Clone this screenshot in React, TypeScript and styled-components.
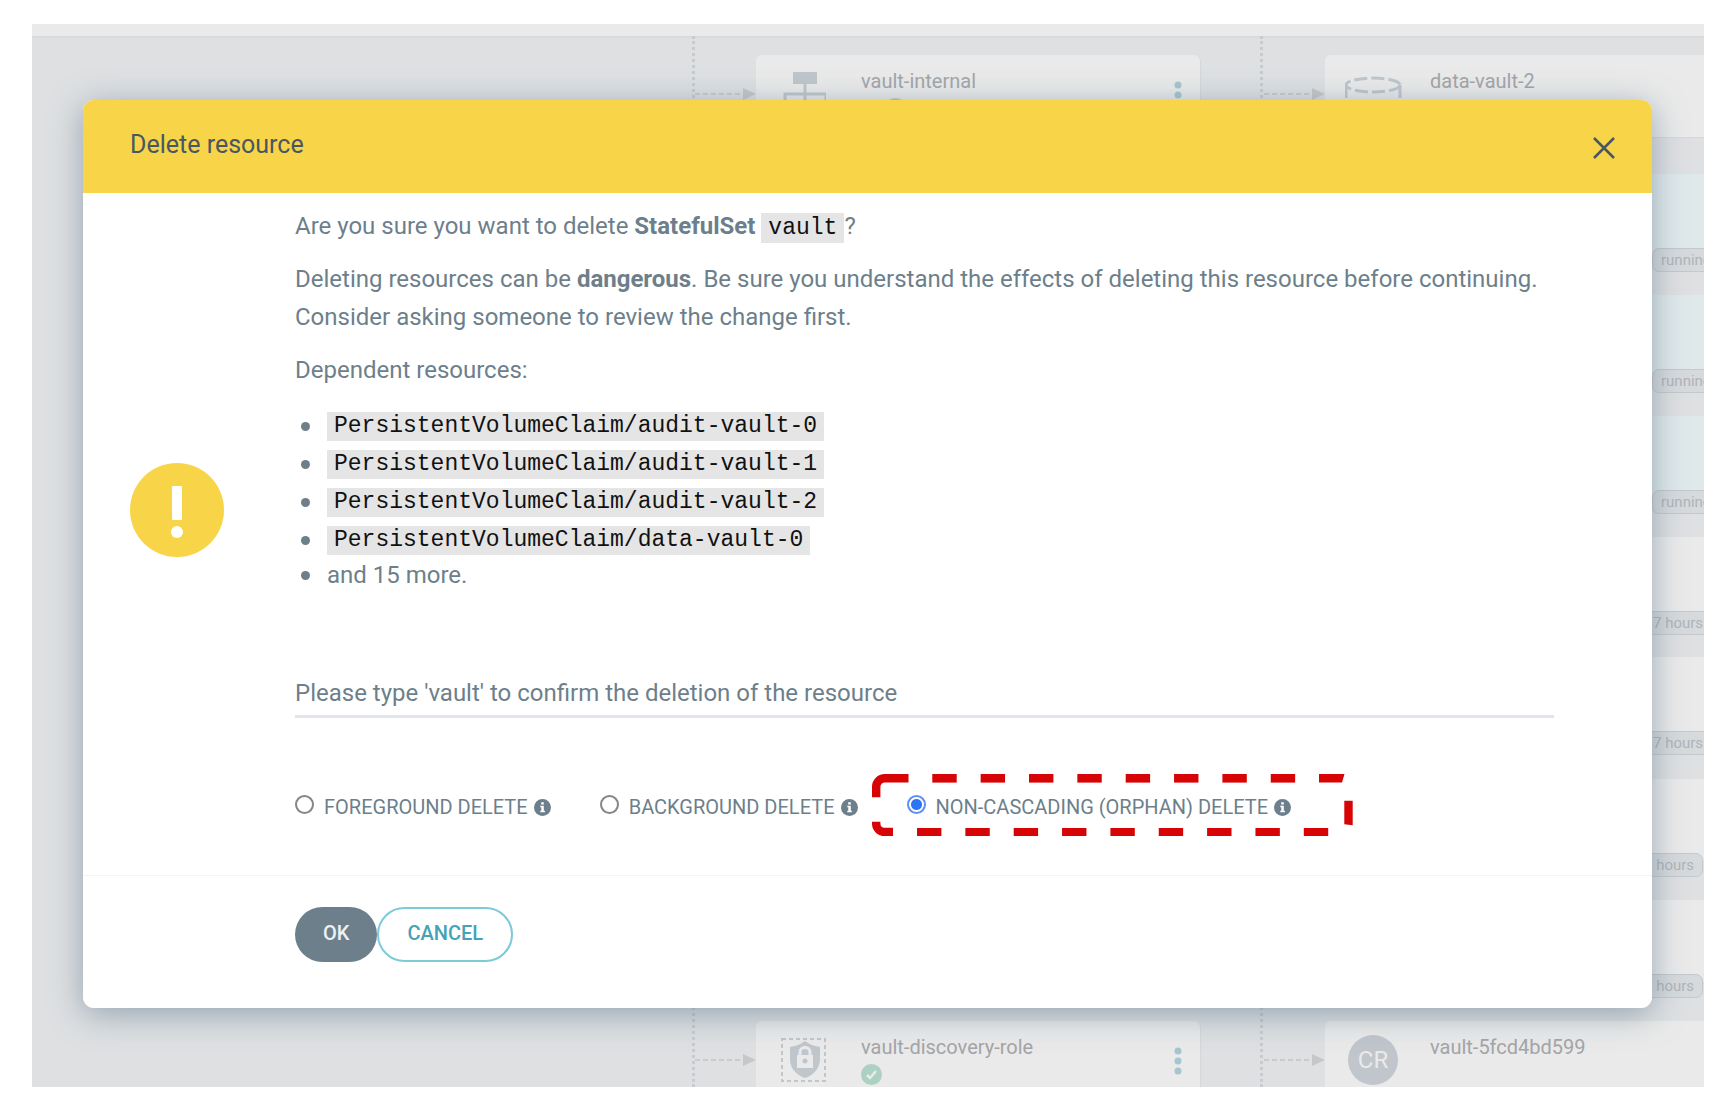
import React, { useState } from "react";
import styled, { createGlobalStyle } from "styled-components";

const GlobalStyle = createGlobalStyle`
  *, *::before, *::after { box-sizing: border-box; }
  body { margin: 0; background: #fff; }
`;

const sans = `Roboto, "Liberation Sans", sans-serif`;
const mono = `"Courier New", "Liberation Mono", monospace`;

const Page = styled.div`
  padding: 24px 29px 31px 32px;
  font-family: ${sans};
  color: #6d7f8b;
`;

const Frame = styled.div`
  position: relative;
  overflow: hidden;
  padding: 76px 52px 79px 51px;
  background: #dee0e2;
`;

/* Resource tree behind the dialog */

const Canvas = styled.div`
  position: absolute;
  inset: 0;
`;

const Toolbar = styled.div`
  height: 12px;
  background: #eaeaea;
  box-shadow: 0 1px 2px #d2d5d7;
`;

const Trunk = styled.div<{ $left: number }>`
  position: absolute;
  top: 12px;
  bottom: 0;
  left: ${(p) => p.$left}px;
  border-left: 3px dotted #c6ccd2;
`;

const Arrow = styled.svg<{ $left: number; $top: number }>`
  position: absolute;
  left: ${(p) => p.$left}px;
  top: ${(p) => p.$top + 32}px;
  width: 63px;
  height: 14px;
`;

const Node = styled.div<{ $left: number; $top: number; $live?: boolean }>`
  position: absolute;
  left: ${(p) => p.$left}px;
  top: ${(p) => p.$top}px;
  display: flex;
  width: 444px;
  height: 82px;
  padding: 14px 18px 0 20px;
  border-radius: 6px;
  background: ${(p) => (p.$live ? "#dfe9ea" : "#eaeaea")};
  box-shadow: 1px 1px 1px #d3d7da;
`;

const NodeIcon = styled.div`
  display: flex;
  flex: none;
  width: 85px;
`;

const NodeText = styled.div`
  flex: 1;
`;

const NodeName = styled.div`
  font-size: 20px;
  line-height: 24px;
  color: #a3a5a9;
`;

const NodeStatus = styled.div`
  display: flex;
  gap: 2px;
  padding-top: 5px;
`;

const Initials = styled.div`
  display: grid;
  place-items: center;
  width: 50px;
  height: 50px;
  margin-left: 3px;
  border-radius: 50%;
  background: #c1c6cc;
  color: #eaeaea;
  font-size: 24px;
`;

const Tag = styled.div<{ $left: number; $top: number }>`
  position: absolute;
  left: ${(p) => p.$left}px;
  top: ${(p) => p.$top + 74}px;
  height: 24px;
  padding: 0 8px;
  border: 1px solid #c3c9cd;
  border-radius: 7px;
  background: #d6dadd;
  color: #b0b4b8;
  font-size: 15px;
  line-height: 22px;
  white-space: nowrap;
`;

/* Dialog */

const Dialog = styled.div`
  position: relative;
  overflow: hidden;
  border-radius: 11px;
  background: #fff;
`;

const DialogShadow = styled.div`
  position: relative;
  border-radius: 11px;
  box-shadow: 0 6px 32px rgba(88, 115, 135, 0.55);
`;

const Header = styled.header`
  display: flex;
  align-items: center;
  justify-content: space-between;
  height: 93px;
  padding: 2px 33px 0 47px;
  background: #f8d448;
  color: #495763;
`;

const Title = styled.h1`
  margin: 0;
  padding-bottom: 6px;
  font-size: 25px;
  line-height: 38px;
  font-weight: 400;
`;

const CloseButton = styled.button`
  display: flex;
  padding: 4px;
  border: 0;
  background: none;
  color: inherit;
`;

const Body = styled.div`
  display: grid;
  grid-template-columns: 94px minmax(0, 1fr);
  column-gap: 71px;
  align-items: center;
  padding: 14px 98px 49px 47px;
  border-bottom: 1px solid #f4f4f4;
`;

const WarningIcon = styled.svg`
  width: 94px;
  height: 94px;
  margin-bottom: 14px;
`;

const Paragraph = styled.p`
  margin: 0 0 15px;
  font-size: 24px;
  line-height: 38px;
`;

const Code = styled.code`
  padding: 2px 7px;
  background: #e5e5e5;
  color: #111;
  font-family: ${mono};
  font-size: 23px;
  line-height: 25px;
`;

const Dependents = styled.ul`
  margin: 0;
  padding: 3px 0 0;
  list-style: none;
  font-size: 24px;
  line-height: 32px;
`;

const Dependent = styled.li`
  display: flex;
  align-items: center;
  gap: 17px;
  height: 38px;
  padding-left: 6px;

  &:last-child {
    height: 32px;
  }

  &::before {
    content: "";
    width: 9px;
    height: 9px;
    border-radius: 50%;
    background: #6d7f8b;
  }
`;

const ConfirmInput = styled.input`
  display: block;
  width: 100%;
  margin-top: 83px;
  padding: 0 0 3px;
  border: 0;
  border-bottom: 3px solid #dfe4ef;
  outline: 0;
  background: none;
  font-family: ${sans};
  font-size: 24px;
  line-height: 38px;
  color: #6d7f8b;

  &::placeholder {
    color: #6d7f8b;
    opacity: 1;
  }
`;

const Options = styled.div`
  display: flex;
  gap: 49px;
  margin-top: 70px;
`;

const Option = styled.label`
  position: relative;
  display: flex;
  align-items: center;
  font-size: 20px;
  line-height: 38px;
  text-transform: uppercase;
  white-space: nowrap;
`;

const Radio = styled.input`
  appearance: none;
  width: 19px;
  height: 19px;
  margin: 0 10px 6px 0;
  border: 2px solid #858585;
  border-radius: 50%;
  background: #fff;

  &:checked {
    border-color: #5b8ff9;
    background: radial-gradient(circle, #2f73f6 5px, #fff 6px);
  }
`;

const InfoIcon = styled.svg`
  width: 17px;
  height: 17px;
  margin-left: 6px;
`;

const Highlight = styled.svg`
  position: absolute;
  left: -35px;
  top: -14px;
  width: 481px;
  height: 62px;
  pointer-events: none;
`;

const Footer = styled.footer`
  display: flex;
  padding: 31px 98px 46px 212px;
`;

const Button = styled.button<{ $outline?: boolean }>`
  height: 55px;
  padding: 0 28px 4px;
  border: ${(p) => (p.$outline ? "2px solid #7ccbd9" : "0")};
  border-radius: 28px;
  background: ${(p) => (p.$outline ? "#fff" : "#6d7f8b")};
  color: ${(p) => (p.$outline ? "#44a3b5" : "#eef1f3")};
  font-family: ${sans};
  font-size: 20px;
  font-weight: 500;
  text-transform: uppercase;
`;

const ServiceIcon = () => (
  <svg width="50" height="60" viewBox="0 0 50 60" fill="none" stroke="#bfc6cc" strokeWidth="3">
    <rect x="17" y="3" width="24" height="12" fill="#bfc6cc" stroke="none" />
    <path d="M29 15v26M9 41V25h41v16" />
  </svg>
);

const VolumeIcon = () => (
  <svg width="80" height="60" viewBox="0 0 80 60" fill="none" stroke="#bfc6cc" strokeWidth="3" strokeDasharray="13 4">
    <ellipse cx="28" cy="16" rx="27" ry="7" />
    <path d="M1 16v34M55 16v34" />
  </svg>
);

const RoleIcon = () => (
  <svg width="50" height="50" viewBox="0 0 50 50">
    <rect x="6" y="4" width="43" height="42" fill="none" stroke="#bfc6cc" strokeWidth="2" strokeDasharray="4 3" />
    <path d="M29 6c5 4 10 5 15 6v12c0 9-6 16-15 19-9-3-15-10-15-19V12c5-1 10-2 15-6z" fill="#bfc6cc" />
    <path d="M24 20v-3c0-6 10-6 10 0v3" fill="none" stroke="#eaeaea" strokeWidth="3" />
    <rect x="21" y="20" width="16" height="13" fill="#eaeaea" />
    <circle cx="29" cy="26" r="2.500" fill="#bfc6cc" />
  </svg>
);

const Heart = () => (
  <svg width="22" height="21" viewBox="0 0 22 21">
    <path d="M11 21L4 13C0 8 7 3 11 7c4-4 11 1 7 6z" fill="#acd0c1" />
  </svg>
);

const Synced = () => (
  <svg width="21" height="21" viewBox="0 0 21 21">
    <circle cx="10.500" cy="10.500" r="10.500" fill="#acd0c1" />
    <path d="M6 11l3 3 6-7" fill="none" stroke="#eaeaea" strokeWidth="2.500" />
  </svg>
);

const Kebab = () => (
  <svg width="8" height="48" viewBox="0 0 8 48" fill="#a5c6ce">
    <circle cx="4" cy="16" r="3.500" />
    <circle cx="4" cy="26" r="3.500" />
    <circle cx="4" cy="36" r="3.500" />
  </svg>
);

const Branch = ({ left, top }: { left: number; top: number }) => (
  <Arrow $left={left} $top={top} viewBox="0 0 63 14">
    <path d="M2 7h46" stroke="#c8cbcd" strokeWidth="2" strokeDasharray="5 3" />
    <path d="M50 1l13 6-13 6z" fill="#c6c7c8" />
  </Arrow>
);

const Info = () => (
  <InfoIcon viewBox="0 0 17 17" aria-hidden="true">
    <circle cx="8.500" cy="8.500" r="8.500" fill="#6d7f8b" />
    <path d="M7.200 3.300h2.600v2.200H7.200zM6.300 6.800h3.500v4.900h1.100v1.500H6.300v-1.500h1V8.300h-1z" fill="#fff" />
  </InfoIcon>
);

const dashes = [0, 1, 2, 3, 4, 5, 6, 7, 8];

const Callout = () => (
  <Highlight viewBox="0 0 481 62" aria-hidden="true">
    <path
      d="M36.500 4.300H13A8.500 8.500 0 0 0 4.200 13V23.300M4.200 47.700V50A8.500 8.500 0 0 0 13 58H21"
      fill="none"
      stroke="#d60404"
      strokeWidth="8.400"
    />
    {dashes.slice(0, 8).map((i) => (
      <rect key={i} x={60.3 + i * 48.35} y="0" width="24.400" height="8.600" fill="#d60404" />
    ))}
    <path d="M447 0h25.500l-2.500 8.600h-23z" fill="#d60404" />
    {dashes.map((i) => (
      <rect key={i} x={45 + i * 48.35} y="54" width="24.400" height="8" fill="#d60404" />
    ))}
    <path d="M472.300 26.700h8.400v24.500l-8.400-1z" fill="#d60404" />
  </Highlight>
);

const options = ["Foreground delete", "Background delete", "Non-cascading (orphan) delete"];
const dependents = ["audit-vault-0", "audit-vault-1", "audit-vault-2", "data-vault-0"];

const pods = [
  { top: 150, live: true, tag: "running", tagLeft: 1620 },
  { top: 271, live: true, tag: "running", tagLeft: 1620 },
  { top: 392, live: true, tag: "running", tagLeft: 1620 },
  { top: 513, live: false, tag: "7 hours", tagLeft: 1612 },
  { top: 633, live: false, tag: "7 hours", tagLeft: 1612 },
  { top: 755, live: false, tag: "7 hours", tagLeft: 1603 },
  { top: 876, live: false, tag: "7 hours", tagLeft: 1603 },
];

const ResourceTree = () => (
  <Canvas>
    <Toolbar />
    <Trunk $left={660} />
    <Trunk $left={1228} />
    <Branch left={661} top={31} />
    <Branch left={661} top={997} />
    <Branch left={1230} top={31} />
    <Branch left={1230} top={997} />
    <Node $left={724} $top={31}>
      <NodeIcon><ServiceIcon /></NodeIcon>
      <NodeText>
        <NodeName>vault-internal</NodeName>
        <NodeStatus><Heart /><Synced /></NodeStatus>
      </NodeText>
      <Kebab />
    </Node>
    <Node $left={724} $top={997}>
      <NodeIcon><RoleIcon /></NodeIcon>
      <NodeText>
        <NodeName>vault-discovery-role</NodeName>
        <NodeStatus><Synced /></NodeStatus>
      </NodeText>
      <Kebab />
    </Node>
    <Node $left={1293} $top={31}>
      <NodeIcon><VolumeIcon /></NodeIcon>
      <NodeText><NodeName>data-vault-2</NodeName></NodeText>
    </Node>
    {pods.map((pod) => (
      <React.Fragment key={pod.top}>
        <Node $left={1293} $top={pod.top} $live={pod.live} />
        <Tag $left={pod.tagLeft} $top={pod.top}>{pod.tag}</Tag>
      </React.Fragment>
    ))}
    <Node $left={1293} $top={997}>
      <NodeIcon><Initials>CR</Initials></NodeIcon>
      <NodeText><NodeName>vault-5fcd4bd599</NodeName></NodeText>
    </Node>
  </Canvas>
);

export default function App() {
  const [mode, setMode] = useState(options[2]);
  const [confirmation, setConfirmation] = useState("");

  return (
    <Page>
      <GlobalStyle />
      <Frame>
        <ResourceTree />
        <DialogShadow>
          <Dialog role="dialog" aria-labelledby="dialog-title">
            <Header>
              <Title id="dialog-title">Delete resource</Title>
              <CloseButton type="button" aria-label="Close">
                <svg width="22" height="22" viewBox="0 0 22 22" stroke="currentColor" strokeWidth="2.500">
                  <path d="M1 1l20 20M21 1L1 21" />
                </svg>
              </CloseButton>
            </Header>
            <Body>
              <WarningIcon viewBox="0 0 94 94" aria-hidden="true">
                <circle cx="47" cy="47" r="47" fill="#f8d448" />
                <rect x="42" y="23" width="10" height="34" rx="1" fill="#fff" />
                <circle cx="47" cy="69" r="6" fill="#fff" />
              </WarningIcon>
              <div>
                <Paragraph>
                  Are you sure you want to delete <strong>StatefulSet</strong> <Code>vault</Code>?
                </Paragraph>
                <Paragraph>
                  Deleting resources can be <strong>dangerous</strong>. Be sure you understand the effects of
                  deleting this resource before continuing. Consider asking someone to review the change first.
                </Paragraph>
                <Paragraph>Dependent resources:</Paragraph>
                <Dependents>
                  {dependents.map((name) => (
                    <Dependent key={name}>
                      <Code>PersistentVolumeClaim/{name}</Code>
                    </Dependent>
                  ))}
                  <Dependent>and 15 more.</Dependent>
                </Dependents>
                <ConfirmInput
                  aria-label="Confirm the resource name"
                  placeholder="Please type 'vault' to confirm the deletion of the resource"
                  value={confirmation}
                  onChange={(e) => setConfirmation(e.target.value)}
                />
                <Options role="radiogroup" aria-label="Deletion mode">
                  {options.map((option) => (
                    <Option key={option}>
                      <Radio
                        type="radio"
                        name="mode"
                        checked={mode === option}
                        onChange={() => setMode(option)}
                      />
                      {option}
                      <Info />
                      {option === options[2] && <Callout />}
                    </Option>
                  ))}
                </Options>
              </div>
            </Body>
            <Footer>
              <Button type="button">OK</Button>
              <Button type="button" $outline>Cancel</Button>
            </Footer>
          </Dialog>
        </DialogShadow>
      </Frame>
    </Page>
  );
}
